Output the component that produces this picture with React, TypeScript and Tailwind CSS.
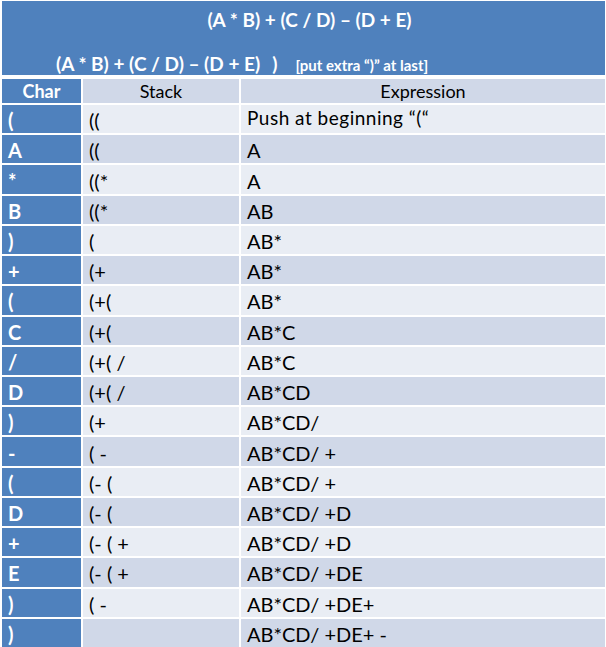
import React from 'react';

type Row = { ch: string; stack: string; expr: string; small?: boolean };

const rows: Row[] = [
  { ch: '(', stack: '((', expr: 'Push at beginning “(“', small: true },
  { ch: 'A', stack: '((', expr: 'A' },
  { ch: '*', stack: '((*', expr: 'A' },
  { ch: 'B', stack: '((*', expr: 'AB' },
  { ch: ')', stack: '(', expr: 'AB*' },
  { ch: '+', stack: '(+', expr: 'AB*' },
  { ch: '(', stack: '(+(', expr: 'AB*' },
  { ch: 'C', stack: '(+(', expr: 'AB*C' },
  { ch: '/', stack: '(+( /', expr: 'AB*C' },
  { ch: 'D', stack: '(+( /', expr: 'AB*CD' },
  { ch: ')', stack: '(+', expr: 'AB*CD/' },
  { ch: '-', stack: '( -', expr: 'AB*CD/ +' },
  { ch: '(', stack: '(- (', expr: 'AB*CD/ +' },
  { ch: 'D', stack: '(- (', expr: 'AB*CD/ +D' },
  { ch: '+', stack: '(- ( +', expr: 'AB*CD/ +D' },
  { ch: 'E', stack: '(- ( +', expr: 'AB*CD/ +DE' },
  { ch: ')', stack: '( -', expr: 'AB*CD/ +DE+' },
  { ch: ')', stack: '', expr: 'AB*CD/ +DE+ -' },
];

export default function App() {
  return (
    <div className="h-[647px] w-[606px] overflow-hidden bg-white pl-[2px] pr-[1px] pt-[1px] font-['Lato','Liberation_Sans',sans-serif] text-black">
      {/* Title block */}
      <div className="flex h-[74px] flex-col justify-between bg-[#4F81BD] text-white">
        <div className="pl-[12px] pt-[7px] text-center text-[19px] font-bold leading-6">
          (A * B) + (C / D) – (D + E)
        </div>
        <div className="flex items-baseline pl-[54px] text-[19px] font-bold leading-5">
          <span>(A * B) + (C / D) – (D + E)</span>
          <span className="ml-[12px]">)</span>
          <span className="ml-[18px] text-[15px]">[put extra “)” at last]</span>
        </div>
      </div>

      {/* Column headers */}
      <div className="mt-[4px] flex h-[24px] gap-[2px] text-[18px] leading-6">
        <div className="flex w-[79px] items-center justify-center bg-[#4F81BD] font-bold text-white">Char</div>
        <div className="flex w-[156px] items-center justify-center bg-[#D0D8E8]">Stack</div>
        <div className="flex flex-1 items-center justify-center bg-[#D0D8E8]">Expression</div>
      </div>

      {/* Steps */}
      <div className="mt-[2px] flex h-[542px] flex-col gap-[2px] text-[20px] leading-6">
        {rows.map((r, i) => {
          const bg = i % 2 === 0 ? 'bg-[#E9EDF4]' : 'bg-[#D0D8E8]';
          return (
            <div key={i} className="flex min-h-0 flex-1 basis-0 gap-[2px]">
              <div className="flex w-[79px] items-center bg-[#4F81BD] pl-[6px] pt-[2px] font-bold text-white">
                {r.ch}
              </div>
              <div className={`flex w-[156px] items-center pl-[6px] pt-[2px] ${bg}`}>{r.stack}</div>
              <div
                className={`flex flex-1 items-center pl-[6px] ${bg} ${
                  r.small ? 'pb-[2px] text-[19px] tracking-[0.5px]' : 'pt-[2px]'
                }`}
              >
                {r.expr}
              </div>
            </div>
          );
        })}
      </div>
    </div>
  );
}
